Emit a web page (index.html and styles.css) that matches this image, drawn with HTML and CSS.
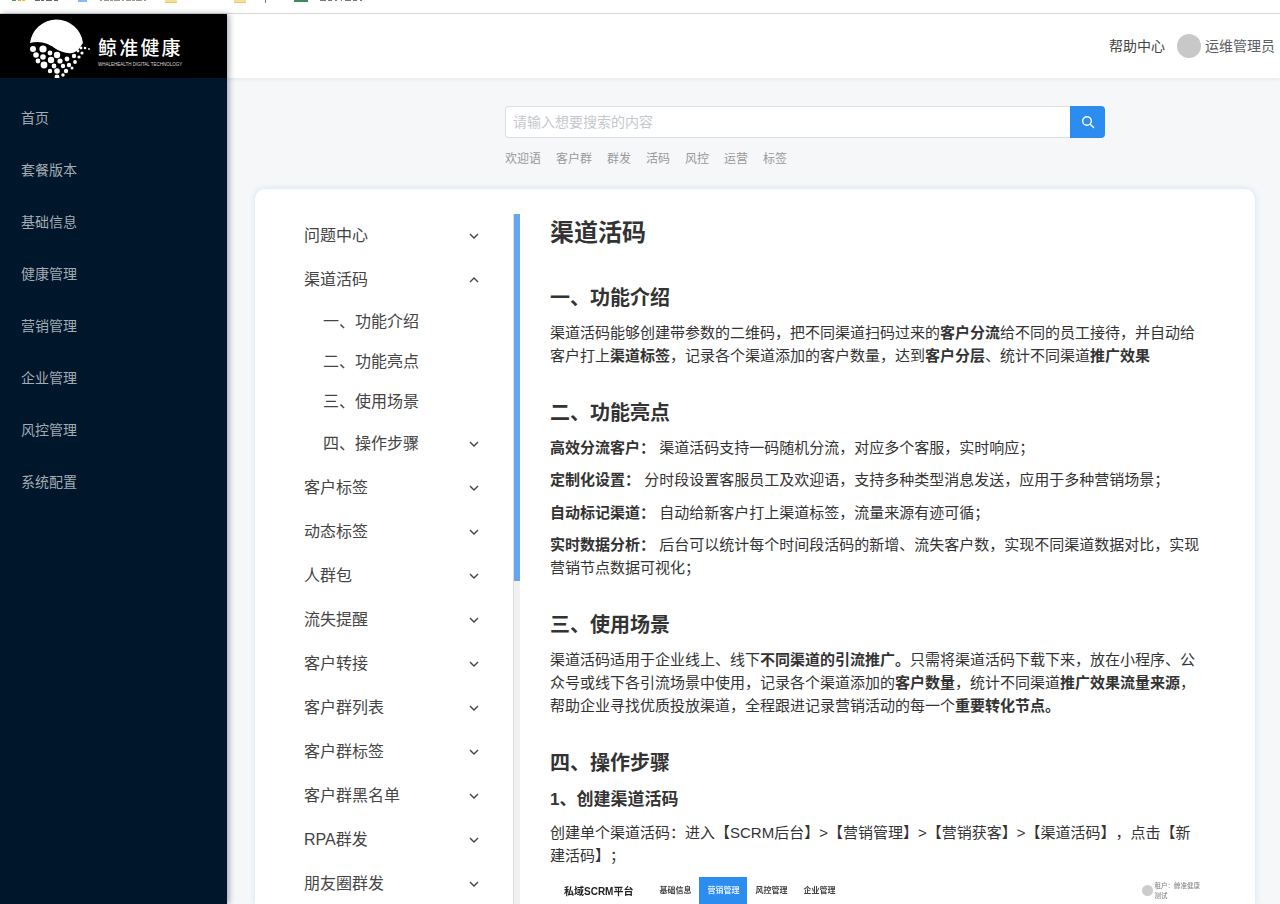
FILE: index.html
```html
<!DOCTYPE html>
<html lang="zh">
<head>
<meta charset="utf-8">
<title>渠道活码</title>
<link rel="stylesheet" href="styles.css">
</head>
<body>
<div class="chrome">
  <svg class="chrome-marks" width="400" height="13" viewBox="0 0 400 13">
    <rect x="12" y="0" width="4" height="1" fill="#34a853"/><rect x="18" y="0" width="3" height="1" fill="#f0a020"/><rect x="22" y="0" width="3" height="1" fill="#fbbc05"/>
    <path d="M35 0.5 H58" stroke="#666" stroke-dasharray="5 1 3 2 6 2"/>
    <rect x="78" y="0" width="9" height="2" fill="#8ab8f5"/>
    <path d="M100 0.5 H146" stroke="#998" stroke-dasharray="2 2 5 1 3 1 6 2"/>
    <rect x="165" y="0" width="12" height="2" fill="#f4df9c"/><rect x="165" y="2" width="12" height="1" fill="#e8c860"/>
    <rect x="234" y="0" width="12" height="2" fill="#f4df9c"/><rect x="234" y="2" width="12" height="1" fill="#e8c860"/>
    <rect x="265" y="0" width="1" height="3" fill="#777"/>
    <rect x="294" y="0" width="14" height="2" fill="#3d8b5c"/>
    <path d="M320 0.5 H365" stroke="#778" stroke-dasharray="6 2 4 3 2 4 1 3"/>
  </svg>
</div>
<div class="app">
  <aside class="side">
    <div class="logo">
      <svg class="logo-mark" width="60" height="60" viewBox="0 0 60 60">
        <path d="M0 24 A26.7 26.7 0 0 1 53 24 C50 28 48 33 42 34 C36 35 30 32 26 30 C20 25 10 21 0 24 Z" fill="#fff"/>
        <g fill="#fff">
          <circle cx="3" cy="30" r="3"/><circle cx="13" cy="30" r="3.6"/><circle cx="6" cy="36" r="2.8"/><circle cx="20" cy="34" r="2.4"/><circle cx="27" cy="36" r="3.2"/><circle cx="13" cy="38" r="2.8"/><circle cx="21" cy="41" r="3.2"/><circle cx="30" cy="42" r="2.6"/><circle cx="37" cy="40" r="2.4"/><circle cx="44" cy="37" r="2.2"/><circle cx="8" cy="42" r="2.4"/><circle cx="14" cy="46" r="3.4"/><circle cx="24" cy="47" r="2.4"/><circle cx="33" cy="47" r="2.2"/><circle cx="39" cy="46" r="2.2"/><circle cx="45" cy="43" r="1.9"/><circle cx="20" cy="52" r="2.2"/><circle cx="27" cy="52" r="2.8"/><circle cx="36" cy="52" r="2.2"/><circle cx="42" cy="49" r="1.5"/><circle cx="27" cy="58" r="2.4"/><circle cx="33" cy="56" r="1.7"/><circle cx="49" cy="38" r="1.6"/><circle cx="52" cy="34" r="1.6"/><circle cx="48" cy="32" r="1.4"/><circle cx="51" cy="29" r="1.4"/><circle cx="55" cy="29" r="1.3"/><circle cx="59" cy="30" r="0.9"/>
        </g>
      </svg>
      <div class="logo-text">
        <div class="logo-cn">鲸准健康</div>
        <div class="logo-en">WHALEHEALTH DIGITAL TECHNOLOGY</div>
      </div>
    </div>
    <nav class="side-nav">
      <a class="side-item">首页</a>
      <a class="side-item">套餐版本</a>
      <a class="side-item">基础信息</a>
      <a class="side-item">健康管理</a>
      <a class="side-item">营销管理</a>
      <a class="side-item">企业管理</a>
      <a class="side-item">风控管理</a>
      <a class="side-item">系统配置</a>
    </nav>
  </aside>
  <div class="main">
    <header class="topbar">
      <span class="help">帮助中心</span>
      <span class="avatar"></span>
      <span class="user">运维管理员</span>
    </header>
    <section class="search-area">
      <div class="search-box">
        <div class="search-input">请输入想要搜索的内容</div>
        <button class="search-btn" aria-label="搜索">
          <svg width="14" height="14" viewBox="0 0 14 14" fill="none" stroke="#fff" stroke-width="1.4"><circle cx="6" cy="6" r="4.3"/><path d="M9.2 9.2 L12.6 12.6" stroke-linecap="round"/></svg>
        </button>
      </div>
      <div class="tags">
        <span>欢迎语</span><span>客户群</span><span>群发</span><span>活码</span><span>风控</span><span>运营</span><span>标签</span>
      </div>
    </section>
    <section class="card">
      <div class="toc">
        <div class="toc-row"><span class="toc-label">问题中心</span><svg class="chev" viewBox="0 0 10 6"><path d="M1 1 L5 5 L9 1"/></svg></div>
        <div class="toc-row"><span class="toc-label">渠道活码</span><svg class="chev" viewBox="0 0 10 6"><path d="M1 5 L5 1 L9 5"/></svg></div>
        <div class="toc-sub"><span class="toc-label">一、功能介绍</span></div>
        <div class="toc-sub"><span class="toc-label">二、功能亮点</span></div>
        <div class="toc-sub"><span class="toc-label">三、使用场景</span></div>
        <div class="toc-sub toc-sub-last"><span class="toc-label">四、操作步骤</span><svg class="chev" viewBox="0 0 10 6"><path d="M1 1 L5 5 L9 1"/></svg></div>
        <div class="toc-row"><span class="toc-label">客户标签</span><svg class="chev" viewBox="0 0 10 6"><path d="M1 1 L5 5 L9 1"/></svg></div>
        <div class="toc-row"><span class="toc-label">动态标签</span><svg class="chev" viewBox="0 0 10 6"><path d="M1 1 L5 5 L9 1"/></svg></div>
        <div class="toc-row"><span class="toc-label">人群包</span><svg class="chev" viewBox="0 0 10 6"><path d="M1 1 L5 5 L9 1"/></svg></div>
        <div class="toc-row"><span class="toc-label">流失提醒</span><svg class="chev" viewBox="0 0 10 6"><path d="M1 1 L5 5 L9 1"/></svg></div>
        <div class="toc-row"><span class="toc-label">客户转接</span><svg class="chev" viewBox="0 0 10 6"><path d="M1 1 L5 5 L9 1"/></svg></div>
        <div class="toc-row"><span class="toc-label">客户群列表</span><svg class="chev" viewBox="0 0 10 6"><path d="M1 1 L5 5 L9 1"/></svg></div>
        <div class="toc-row"><span class="toc-label">客户群标签</span><svg class="chev" viewBox="0 0 10 6"><path d="M1 1 L5 5 L9 1"/></svg></div>
        <div class="toc-row"><span class="toc-label">客户群黑名单</span><svg class="chev" viewBox="0 0 10 6"><path d="M1 1 L5 5 L9 1"/></svg></div>
        <div class="toc-row"><span class="toc-label">RPA群发</span><svg class="chev" viewBox="0 0 10 6"><path d="M1 1 L5 5 L9 1"/></svg></div>
        <div class="toc-row"><span class="toc-label">朋友圈群发</span><svg class="chev" viewBox="0 0 10 6"><path d="M1 1 L5 5 L9 1"/></svg></div>
      </div>
      <div class="scroll"><div class="scroll-thumb"></div></div>
      <article class="doc">
        <h1>渠道活码</h1>
        <h2 class="h-first">一、功能介绍</h2>
        <p>渠道活码能够创建带参数的二维码，把不同渠道扫码过来的<b>客户分流</b>给不同的员工接待，并自动给客户打上<b>渠道标签</b>，记录各个渠道添加的客户数量，达到<b>客户分层</b>、统计不同渠道<b>推广效果</b></p>
        <h2 class="h-two">二、功能亮点</h2>
        <p class="pt"><b>高效分流客户：</b> 渠道活码支持一码随机分流，对应多个客服，实时响应；</p>
        <p class="pt"><b>定制化设置：</b> 分时段设置客服员工及欢迎语，支持多种类型消息发送，应用于多种营销场景；</p>
        <p class="pt"><b>自动标记渠道：</b> 自动给新客户打上渠道标签，流量来源有迹可循；</p>
        <p class="pt"><b>实时数据分析：</b> 后台可以统计每个时间段活码的新增、流失客户数，实现不同渠道数据对比，实现营销节点数据可视化；</p>
        <h2 class="h-three">三、使用场景</h2>
        <p>渠道活码适用于企业线上、线下<b>不同渠道的引流推广。</b>只需将渠道活码下载下来，放在小程序、公众号或线下各引流场景中使用，记录各个渠道添加的<b>客户数量</b>，统计不同渠道<b>推广效果流量来源</b>，帮助企业寻找优质投放渠道，全程跟进记录营销活动的每一个<b>重要转化节点。</b></p>
        <h2 class="h-four">四、操作步骤</h2>
        <h3>1、创建渠道活码</h3>
        <p>创建单个渠道活码：进入【SCRM后台】&gt;【营销管理】&gt;【营销获客】&gt;【渠道活码】，点击【新建活码】；</p>
        <div class="shot">
          <span class="shot-brand">私域SCRM平台</span>
          <span class="shot-item">基础信息</span>
          <span class="shot-item shot-active">营销管理</span>
          <span class="shot-item">风控管理</span>
          <span class="shot-item">企业管理</span>
          <span class="shot-user"><i class="shot-dot"></i><span class="shot-tenant">租户：鲸准健康<br>测试</span></span>
        </div>
      </article>
    </section>
  </div>
</div>
</body>
</html>
```
FILE: styles.css
```css
* { box-sizing: border-box; }
html, body { margin: 0; height: 100%; overflow: hidden; }
body {
  font-family: "Liberation Sans", "Noto Sans CJK SC", sans-serif;
  text-spacing-trim: space-all;
  background: #f5f7f9;
  color: #333;
  width: 1280px;
  height: 904px;
}
.chrome { height: 14px; background: #fff; border-bottom: 1px solid #dcdcdc; overflow: hidden; }
.chrome-marks { display: block; }
.app { display: flex; height: 890px; }
.side {
  width: 227px;
  flex: none;
  background: #00162b;
  box-shadow: 2px 0 6px rgba(0, 21, 41, .35);
  position: relative;
  z-index: 2;
}
.logo {
  height: 64px;
  background: #000;
  display: flex;
  align-items: flex-start;
  padding: 5px 0 0 30px;
  overflow: hidden;
}
.logo-mark { flex: none; }
.logo-text { margin: 19px 0 0 8px; color: #fff; }
.logo-cn { font-size: 19px; line-height: 22px; letter-spacing: 2.2px; white-space: nowrap; font-weight: 500; }
.logo-en { font-size: 4.5px; line-height: 6px; margin-top: 2px; white-space: nowrap; color: #ddd; font-family: "Liberation Sans", sans-serif; }
.side-nav { display: flex; flex-direction: column; padding-top: 14px; }
.side-item {
  height: 52px;
  line-height: 52px;
  padding-left: 21px;
  font-size: 14px;
  color: #a3abb3;
}
.main { flex: 1; min-width: 0; display: flex; flex-direction: column; }
.topbar {
  height: 64px;
  flex: none;
  background: #fff;
  box-shadow: 0 1px 4px rgba(0, 21, 41, .08);
  display: flex;
  align-items: center;
  justify-content: flex-end;
  padding-right: 5px;
  font-size: 14px;
}
.help { color: #444; margin-bottom: 2px; }
.avatar { width: 24px; height: 24px; border-radius: 50%; background: #c8c8c8; margin: 0 4px 0 12px; }
.user { color: #5a5e66; margin-bottom: 2px; }
.search-area { padding: 28px 0 0 278px; height: 111px; flex: none; }
.search-box { display: flex; width: 600px; height: 32px; }
.search-input {
  flex: 1;
  border: 1px solid #dcdee2;
  border-right: 0;
  border-radius: 4px 0 0 4px;
  background: #fff;
  padding-left: 7px;
  font-size: 14px;
  line-height: 30px;
  color: #c5c8ce;
}
.search-btn {
  width: 35px;
  border: 0;
  padding: 0;
  border-radius: 0 4px 4px 0;
  background: #2d8cf0;
  display: flex;
  align-items: center;
  justify-content: center;
}
.tags { display: flex; gap: 15px; margin-top: 12px; font-size: 12px; line-height: 18px; color: #999; }
.card {
  margin-left: 28px;
  width: 1000px;
  flex: 1;
  min-height: 0;
  background: #fff;
  border-radius: 10px 10px 0 0;
  box-shadow: 0 0 6px rgba(45, 140, 240, .18);
  display: flex;
  align-items: flex-start;
  padding-top: 24px;
  overflow: hidden;
}
.toc { width: 258px; flex: none; font-size: 16px; color: #444; }
.toc-row, .toc-sub {
  display: flex;
  align-items: center;
  justify-content: space-between;
  padding-right: 34px;
}
.toc-row { height: 44px; padding-left: 49px; }
.toc-sub { height: 40px; padding-left: 68px; }
.toc-sub-last { height: 44px; }
.toc-label { padding-bottom: 2px; }
.chev { width: 10px; height: 6px; margin-top: 2px; fill: none; stroke: #444; stroke-width: 1.4; }
.scroll { width: 7px; height: 690px; flex: none; margin-top: 1px; background: #f1f1f1; border-left: 1px solid #ddd; }
.scroll-thumb { width: 6px; height: 367px; background: #66a6f0; }
.doc { flex: 1; min-width: 0; padding: 0 50px 0 30px; font-size: 15px; color: #333; }
.doc h1 { margin: 2px 0 0; font-size: 24px; line-height: 36px; font-weight: 700; }
.doc h2 { margin: 0; font-size: 20px; line-height: 30px; font-weight: 700; }
.doc h3 { margin: 7px 0 0; font-size: 17px; line-height: 30px; font-weight: 700; }
.doc p { margin: 0; line-height: 23px; }
.doc p.pt { margin-bottom: 9.33px; }
.doc .h-first { padding-top: 32px; padding-bottom: 8px; }
.doc .h-two { margin-top: 31px; margin-bottom: 8px; }
.doc .h-three { margin-top: 31px; margin-bottom: 8px; }
.doc .h-four { margin-top: 31px; }
.doc h3 + p { margin-top: 6px; }
.shot {
  display: flex;
  align-items: center;
  height: 28px;
  margin-top: 10px;
  font-size: 8px;
  color: #444;
  filter: blur(.4px);
  font-weight: 700;
}
.shot-brand { font-size: 10px; margin: 0 18px 0 14px; color: #222; }
.shot-item { width: 48px; height: 100%; line-height: 28px; text-align: center; }
.shot-active { background: #2d8cf0; color: #dfeeff; }
.shot-user { margin-left: auto; margin-right: 5px; display: flex; align-items: center; gap: 2px; font-size: 6.5px; line-height: 10px; font-weight: 400; color: #777; }
.shot-dot { width: 11px; height: 11px; border-radius: 50%; background: #ccc; }
```
